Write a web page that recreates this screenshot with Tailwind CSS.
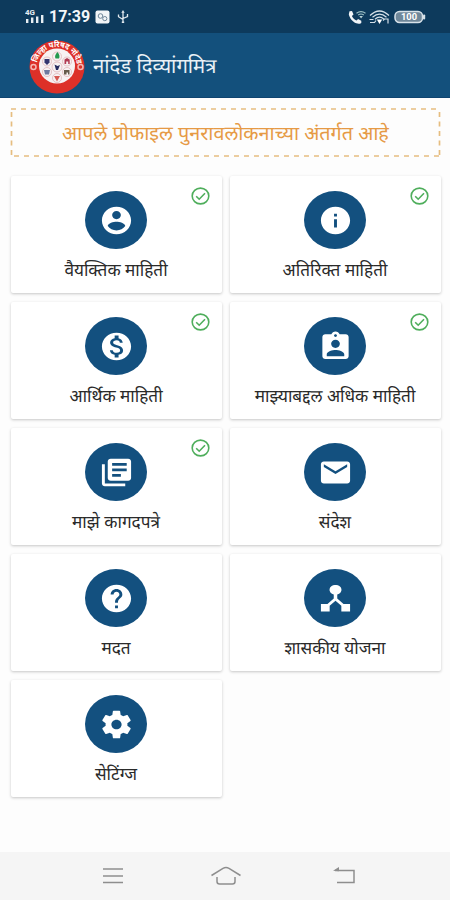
<!DOCTYPE html>
<html lang="mr">

<head>
  <meta charset="UTF-8" />
  <meta name="viewport" content="width=device-width, initial-scale=1.0" />
  <title>नांदेड दिव्यांगमित्र</title>
  <script src="https://cdn.jsdelivr.net/npm/@tailwindcss/browser@4"></script>
</head>

<body class="w-[450px] h-[900px] overflow-hidden bg-[#fdfdfd] flex flex-col font-['Noto_Sans_Devanagari','Noto_Sans',sans-serif]">
  <!-- Status bar -->
  <div class="h-[33px] shrink-0 bg-[#0d3a5c] flex items-center justify-between pt-px pl-[25px] pr-[24px] text-white">
    <div class="flex items-center">
      <svg class="w-[20px] h-[16px]" viewBox="0 0 20 16" fill="#e6edf2">
        <text x="0" y="6" font-size="7" font-weight="700" font-family="Roboto, sans-serif" textLength="10" lengthAdjust="spacingAndGlyphs">4G</text>
        <rect x="1" y="10" width="2.4" height="4" />
        <rect x="6" y="8.5" width="2.4" height="5.5" />
        <rect x="11" y="7.5" width="2.4" height="6.5" />
        <rect x="16" y="6" width="2.4" height="8" />
      </svg>
      <span class="ml-[4px] w-[42px] text-[16px] leading-none font-bold font-['Roboto',sans-serif] text-[#f2f6f9]">17:39</span>
      <svg class="ml-[4px] w-[15px] h-[14px]" viewBox="0 0 15 14">
        <rect x="0.5" y="0.5" width="14" height="13" rx="2" fill="#f2f5f7" />
        <circle cx="5.5" cy="6" r="2.3" fill="none" stroke="#6d8598" />
        <circle cx="9.8" cy="8.6" r="2.1" fill="none" stroke="#6d8598" />
      </svg>
      <svg class="ml-[7px] w-[12px] h-[14px]" viewBox="0 0 12 14" fill="none" stroke="#dfe7ed" stroke-width="1.3">
        <path d="M6 2v10M1.5 4.5v2.2L6 9.5M10.500 4v2.500L6 8.500" />
        <path d="M4.300 2.800L6 0l1.700 2.800zM4.800 11.500h2.400v1.500H4.800z" fill="#dfe7ed" stroke="none" />
      </svg>
    </div>
    <div class="flex items-center">
      <svg class="w-[18px] h-[15px]" viewBox="0 0 18 15">
        <path d="M1.500 1.200L4 1l1.500 3.600-1.600 1.500c1 2.200 2.500 3.500 4.600 4.400l1.600-1.500 3.200 1.700v2.200c-1.500 1-3 1.100-5 .4C4.500 11.700 1.600 8 .8 4.200z" fill="#f0f4f7" />
        <path d="M8.500 3.200q4.500-3 9 0M10.200 4.900q2.800-1.800 5.600 0" fill="none" stroke="#9fc3c6" stroke-width="1.200" />
        <path d="M11.300 6h3.600l-1.800 2.500z" fill="#b9d3d6" />
      </svg>
      <svg class="ml-[3px] w-[21px] h-[15px]" viewBox="0 0 21 15" fill="none" stroke="#d5e0e8" stroke-width="1.200">
        <path d="M1 5.500q9.500-9 19 0M3.500 7.200q7-6 14 0M6 9.200q4.500-4 9 0" />
        <path d="M7.800 9.500h5.400l-2.700 4.500z" fill="#fff" stroke="none" />
        <path d="M1 12.500h4.500l1.500-2M.5 9.500h4M14 10.500l1.500-1.500h3.500v4.500" />
      </svg>
      <svg class="ml-[4px] w-[32px] h-[14px]" viewBox="0 0 32 14">
        <rect x="1" y="1.500" width="27.500" height="11" rx="4.500" fill="#6f8799" stroke="#d8e2e9" stroke-width="1.500" />
        <rect x="29" y="4.500" width="2.200" height="5" rx="1" fill="#d8e2e9" />
        <text x="7" y="10.300" font-size="9" font-weight="700" fill="#fff" font-family="Roboto, sans-serif" textLength="16" lengthAdjust="spacingAndGlyphs">100</text>
      </svg>
    </div>
  </div>

  <!-- App bar -->
  <header class="h-[65px] shrink-0 bg-[#13507c] border-b border-[#0f4470] flex items-center pl-[29px]">
    <svg class="w-[56px] h-[54px] mt-[3px]" viewBox="0 0 56 54">
      <ellipse cx="28" cy="27" rx="27.500" ry="26.500" fill="#dd3028" />
      <ellipse cx="28" cy="26" rx="18" ry="17.500" fill="#f7f1f2" />
      <path id="ring" d="M8 26A20 19 0 0 1 48 26" fill="none" />
      <text font-size="8" font-weight="700" fill="#fff"><textPath href="#ring" textLength="56" lengthAdjust="spacingAndGlyphs" startOffset="3">जिल्हा परिषद नांदेड</textPath></text>
      <g fill="none" stroke="#f4b8b4" stroke-width="1.500">
        <circle cx="4.500" cy="27" r="2.500" />
        <circle cx="51.500" cy="27" r="2.500" />
      </g>
      <g fill="none" stroke="#dfb6b9" stroke-width=".8">
        <circle cx="28" cy="27" r="5" />
        <circle cx="28" cy="16.500" r="4.500" />
        <circle cx="18" cy="21.500" r="4.500" />
        <circle cx="38" cy="21.500" r="4.500" />
        <circle cx="18" cy="32" r="4.500" />
        <circle cx="38" cy="32" r="4.500" />
        <circle cx="28" cy="38" r="4.500" />
      </g>
      <path d="M28.500 12q3 3.500 1.500 6.500h-3.500q-1.500-3 2-6.500z" fill="#249a50" />
      <path d="M15.500 19h5v3.500l-2.500 2.500-2.500-2.500z" fill="#35366f" />
      <path d="M35.500 24v-4.500l2.500-1.500 2.700 1.500V24h-1.500v-2.500h-2V24z" fill="#b13a52" />
      <path d="M25.500 24.500l3 1.500 2.500-1-2 5h-2z" fill="#262b5e" />
      <path d="M15 30h6l-1 4.500h-4z" fill="#6f7aa0" />
      <path d="M35 30h5.500v4.500h-1.500v-2h-1.500v2H35z" fill="#665a4b" />
      <path d="M25 36h6l-3 5.500z" fill="#d55a52" />
    </svg>
    <h1 class="ml-[8px] mt-[5px] text-[20.3px] leading-[28px] text-[#e9f1f6] whitespace-nowrap">नांदेड दिव्यांगमित्र</h1>
  </header>

  <main class="flex-1 px-[10px] pt-[10px]">
    <!-- Profile review notice -->
    <div class="grid h-[50px] w-[431px]">
      <svg class="col-start-1 row-start-1 w-[431px] h-[50px]" viewBox="0 0 431 50" fill="none" stroke="#e6bd80" stroke-width="1.700">
        <path d="M1 1H430M4 48H430" stroke-dasharray="5 5" />
        <path d="M1.500 4V47M429.500 4V47" stroke-dasharray="5 4.500" />
      </svg>
      <p class="col-start-1 row-start-1 self-center pt-[3px] text-center text-[19.8px] leading-[28px] text-[#e69a45] whitespace-nowrap">आपले प्रोफाइल पुनरावलोकनाच्या अंतर्गत आहे</p>
    </div>

    <div id="menu" class="mt-[18px] ml-[1px] w-[430px] grid grid-cols-2 gap-x-[8px] gap-y-[9px]"></div>
  </main>

  <!-- Navigation bar -->
  <nav class="h-[48px] shrink-0 bg-[#f5f5f5] flex items-center pl-[102px]">
    <svg class="w-[22px] h-[18px]" viewBox="0 0 22 18" stroke="#8e8e8e" stroke-width="1.500">
      <path d="M1 2h20M1 9h20M1 15.500h20" />
    </svg>
    <svg class="ml-[87px] w-[30px] h-[20px]" viewBox="0 0 30 20" fill="none" stroke="#8e8e8e" stroke-width="1.500">
      <path d="M0.500 9.500L12 2.300q3-1.500 6 0L29.500 9.500M6 11v4.500q0 2.500 2.500 2.500h13q2.500 0 2.500-2.500V11" />
    </svg>
    <svg class="ml-[92px] w-[22px] h-[18px]" viewBox="0 0 22 18" fill="none" stroke="#8e8e8e" stroke-width="1.500">
      <path d="M2 3.500h19V15.500H4" />
      <path d="M0 3.800L6 0v4.300z" fill="#8e8e8e" stroke="none" />
    </svg>
  </nav>

  <script>
    const items = [
      { title: "वैयक्तिक माहिती", done: true, icon: "M12 2C6.480 2 2 6.480 2 12s4.480 10 10 10 10-4.480 10-10S17.520 2 12 2zm0 3c1.660 0 3 1.340 3 3s-1.340 3-3 3-3-1.340-3-3 1.340-3 3-3zm0 14.200c-2.500 0-4.710-1.280-6-3.220.030-1.990 4-3.080 6-3.080 1.990 0 5.970 1.090 6 3.080-1.290 1.940-3.500 3.220-6 3.220z" },
      { title: "अतिरिक्त माहिती", done: true, icon: "M12 2C6.480 2 2 6.480 2 12s4.480 10 10 10 10-4.480 10-10S17.520 2 12 2zm1 15h-2v-6h2v6zm0-8h-2V7h2v2z" },
      { title: "आर्थिक माहिती", done: true, icon: "M12 2C6.480 2 2 6.480 2 12s4.480 10 10 10 10-4.480 10-10S17.520 2 12 2zm1.410 16.090V20h-2.670v-1.930c-1.710-.36-3.160-1.460-3.270-3.400h1.960c.1 1.050.82 1.870 2.650 1.870 1.960 0 2.400-.98 2.400-1.590 0-.83-.44-1.610-2.670-2.140-2.480-.6-4.180-1.620-4.180-3.670 0-1.720 1.390-2.840 3.110-3.210V4h2.670v1.950c1.860.45 2.790 1.860 2.850 3.390H14.300c-.050-1.110-.64-1.870-2.220-1.870-1.500 0-2.400.68-2.400 1.640 0 .84.65 1.390 2.670 1.910s4.180 1.390 4.180 3.910c-.010 1.830-1.380 2.830-3.120 3.160z" },
      { title: "माझ्याबद्दल अधिक माहिती", done: true, icon: "M19 3h-4.180C14.400 1.840 13.300 1 12 1c-1.300 0-2.400.84-2.820 2H5c-1.100 0-2 .9-2 2v14c0 1.100.9 2 2 2h14c1.100 0 2-.9 2-2V5c0-1.100-.9-2-2-2zm-7 0c.55 0 1 .45 1 1s-.45 1-1 1-1-.45-1-1 .45-1 1-1zm0 4c1.660 0 3 1.340 3 3s-1.340 3-3 3-3-1.340-3-3 1.340-3 3-3zm6 12H6v-1.400c0-2 4-3.100 6-3.100s6 1.100 6 3.100V19z" },
      { title: "माझे कागदपत्रे", done: true, icon: "M4 6H2v14c0 1.100.9 2 2 2h14v-2H4V6zm16-4H8c-1.100 0-2 .9-2 2v12c0 1.100.9 2 2 2h12c1.100 0 2-.9 2-2V4c0-1.100-.9-2-2-2zm-1 9H9V9h10v2zm-4 4H9v-2h6v2zm4-8H9V5h10v2z" },
      { title: "संदेश", done: false, icon: "M20 4H4c-1.100 0-1.990.9-1.990 2L2 18c0 1.100.9 2 2 2h16c1.100 0 2-.9 2-2V6c0-1.100-.9-2-2-2zm0 4l-8 5-8-5V6l8 5 8-5v2z" },
      { title: "मदत", done: false, icon: "M12 2C6.480 2 2 6.480 2 12s4.480 10 10 10 10-4.480 10-10S17.520 2 12 2zm1 17h-2v-2h2v2zm2.070-7.750l-.9.920C13.450 12.900 13 13.500 13 15h-2v-.5c0-1.100.45-2.100 1.170-2.830l1.240-1.260c.37-.36.59-.86.59-1.410 0-1.100-.9-2-2-2s-2 .9-2 2H8c0-2.210 1.790-4 4-4s4 1.790 4 4c0 .88-.36 1.680-.93 2.250z" },
      { title: "शासकीय योजना", done: false, icon: "M12 2.200a3.600 3.500 0 0 1 1.200 6.900V12l4.300 4H22v5.500h-6v-4.200l-4-3.700-4 3.700v4.200H2V16h4.500l4.300-4V9.100A3.600 3.500 0 0 1 12 2.200z" },
      { title: "सेटिंग्ज", done: false, icon: "M19.430 12.980c.040-.32.070-.64.070-.98s-.030-.66-.070-.98l2.110-1.650c.19-.15.24-.42.12-.64l-2-3.460c-.12-.22-.39-.3-.61-.22l-2.490 1c-.52-.4-1.080-.73-1.690-.98l-.38-2.650C14.460 2.180 14.250 2 14 2h-4c-.25 0-.46.18-.49.42l-.38 2.650c-.61.25-1.170.59-1.690.98l-2.490-1c-.23-.09-.49 0-.61.22l-2 3.460c-.13.22-.07.49.12.64l2.110 1.650c-.040.32-.070.65-.070.98s.030.66.070.98l-2.110 1.650c-.19.15-.24.42-.12.64l2 3.460c.12.22.39.3.61.22l2.490-1c.52.4 1.080.73 1.690.98l.38 2.650c.030.24.24.42.49.42h4c.25 0 .46-.18.49-.42l.38-2.650c.61-.25 1.170-.59 1.690-.98l2.490 1c.23.090.49 0 .61-.22l2-3.460c.12-.22.070-.49-.12-.64l-2.110-1.650zM12 15.500c-1.930 0-3.500-1.570-3.500-3.500s1.570-3.500 3.500-3.500 3.500 1.570 3.500 3.500-1.570 3.500-3.500 3.500z" }
    ];

    const tick = `
      <svg class="absolute top-[11px] right-[12px] w-[19px] h-[18px]" viewBox="0 0 19 18" fill="none" stroke="#4fae5c" stroke-width="1.600">
        <ellipse cx="9.500" cy="9" rx="8.300" ry="7.900" />
        <path d="M5.200 9.200l3 3 5.800-6" />
      </svg>`;

    document.getElementById("menu").innerHTML = items.map(item => `
      <a class="relative h-[117px] bg-white rounded-[2px] shadow-[0_1px_3px_rgba(0,0,0,0.22)] flex flex-col items-center pt-[15px] pr-px">
        ${item.done ? tick : ""}
        <div class="w-[62px] h-[58px] rounded-[50%] bg-[#13507f] flex items-center justify-center">
          <svg class="w-[35px] h-[33px]" viewBox="0 0 24 24" preserveAspectRatio="none" fill="#fff"><path d="${item.icon}" /></svg>
        </div>
        <span class="mt-[10px] text-[17.2px] leading-[26px] text-[#2a2a2a] whitespace-nowrap">${item.title}</span>
      </a>`).join("");
  </script>
</body>

</html>
